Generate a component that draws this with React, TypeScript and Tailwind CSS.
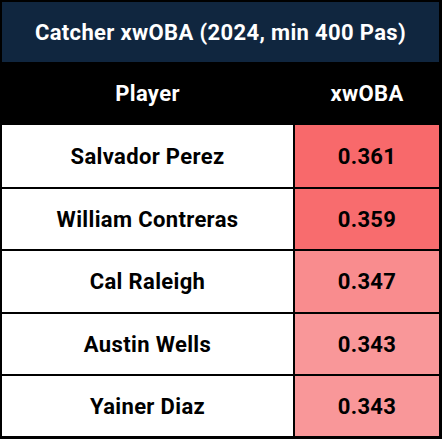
import React from "react";

const rows = [
  { name: "Salvador Perez", v: "0.361", bg: "bg-[#f8696b]", h: "h-[62px]" },
  { name: "William Contreras", v: "0.359", bg: "bg-[#f86c6e]", h: "h-[60px]" },
  { name: "Cal Raleigh", v: "0.347", bg: "bg-[#f98c8e]", h: "h-[61px]" },
  { name: "Austin Wells", v: "0.343", bg: "bg-[#f99799]", h: "h-[60px]" },
  { name: "Yainer Diaz", v: "0.343", bg: "bg-[#f99799]", h: "h-[60px]" },
];

export default function App() {
  return (
    <div
      className="w-[442px] h-[439px] bg-black pt-[2px] pl-[2px] pr-[3px] pb-[3px] flex flex-col tracking-[0.35px]"
      style={{ fontFamily: "Roboto, 'Liberation Sans', sans-serif" }}
    >
      <div className="h-[60px] bg-[#10263f] flex items-center justify-center text-white font-bold text-[22px]">
        Catcher xwOBA (2024, min 400 Pas)
      </div>
      <div className="h-[63px] flex text-white font-bold text-[22px]">
        <div className="w-[291px] flex items-center justify-center">Player</div>
        <div className="w-[2px]" />
        <div className="flex-1 flex items-center justify-center">xwOBA</div>
      </div>
      {rows.map((r, i) => (
        <div key={r.name} className={`flex ${i > 0 ? "border-t-2 border-black" : ""}`}>
          <div className={`${r.h} w-[291px] bg-white flex items-center justify-center text-black font-bold text-[22px]`}>
            {r.name}
          </div>
          <div className="w-[2px] bg-black" />
          <div className={`${r.h} flex-1 ${r.bg} flex items-center justify-center text-black font-bold text-[22px]`}>
            {r.v}
          </div>
        </div>
      ))}
    </div>
  );
}
